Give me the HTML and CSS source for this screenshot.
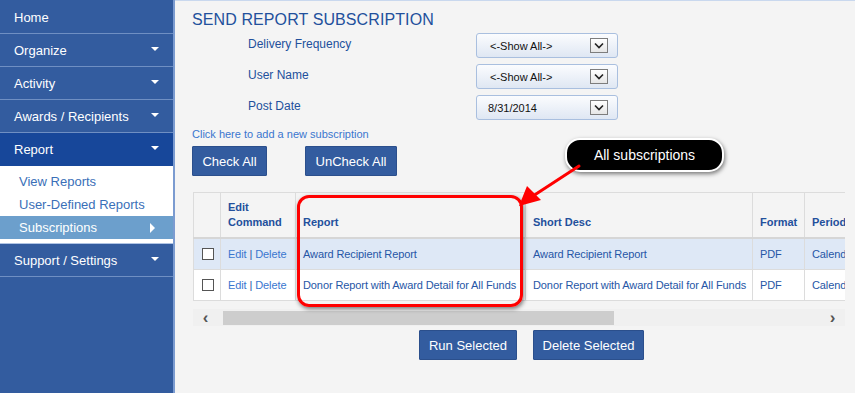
FILE: index.html
```html
<!DOCTYPE html>
<html>
  <head>
    <link rel="stylesheet" href="styles.css">
  </head>
  <body>
    <div class="page">
      <nav class="sidebar">
        <div class="nav-item">Home</div>
        <div class="nav-item has-menu">Organize<span class="caret"></span></div>
        <div class="nav-item has-menu">Activity<span class="caret"></span></div>
        <div class="nav-item has-menu">Awards / Recipients<span class="caret"></span></div>
        <div class="nav-item has-menu active">Report<span class="caret"></span></div>
        <div class="submenu">
          <div class="sub-item">View Reports</div>
          <div class="sub-item">User-Defined Reports</div>
          <div class="sub-item current">Subscriptions<span class="caret-right"></span></div>
        </div>
        <div class="nav-item has-menu">Support / Settings<span class="caret"></span></div>
      </nav>

      <main class="main">
        <h1 class="title">SEND REPORT SUBSCRIPTION</h1>

        <div class="filters">
          <label class="filter-label">Delivery Frequency</label>
          <div class="select"><span>&lt;-Show All-&gt;</span><span class="select-btn"><svg width="10" height="7" viewBox="0 0 10 7"><path d="M1 1.5 L5 5.5 L9 1.5" fill="none" stroke="#222" stroke-width="1.6"/></svg></span></div>
          <label class="filter-label">User Name</label>
          <div class="select"><span>&lt;-Show All-&gt;</span><span class="select-btn"><svg width="10" height="7" viewBox="0 0 10 7"><path d="M1 1.5 L5 5.5 L9 1.5" fill="none" stroke="#222" stroke-width="1.6"/></svg></span></div>
          <label class="filter-label">Post Date</label>
          <div class="select date"><span>8/31/2014</span><span class="select-btn"><svg width="10" height="7" viewBox="0 0 10 7"><path d="M1 1.5 L5 5.5 L9 1.5" fill="none" stroke="#222" stroke-width="1.6"/></svg></span></div>
        </div>

        <a class="add-link" href="#">Click here to add a new subscription</a>

        <div class="check-buttons">
          <button class="btn">Check All</button>
          <button class="btn">UnCheck All</button>
        </div>

        <div class="grid-area">
          <div class="grid-wrap">
            <table class="grid">
              <colgroup>
                <col class="c-check"><col class="c-edit"><col class="c-report"><col class="c-desc"><col class="c-format"><col class="c-period">
              </colgroup>
              <thead>
                <tr>
                  <th></th>
                  <th>Edit<br>Command</th>
                  <th>Report</th>
                  <th>Short Desc</th>
                  <th>Format</th>
                  <th>Period</th>
                </tr>
              </thead>
              <tbody>
                <tr class="alt">
                  <td class="cb"><span class="checkbox"></span></td>
                  <td class="cmd"><a href="#">Edit</a> | <a href="#">Delete</a></td>
                  <td>Award Recipient Report</td>
                  <td>Award Recipient Report</td>
                  <td>PDF</td>
                  <td>Calendar Year</td>
                </tr>
                <tr>
                  <td class="cb"><span class="checkbox"></span></td>
                  <td class="cmd"><a href="#">Edit</a> | <a href="#">Delete</a></td>
                  <td>Donor Report with Award Detail for All Funds</td>
                  <td>Donor Report with Award Detail for All Funds</td>
                  <td>PDF</td>
                  <td>Calendar Year</td>
                </tr>
              </tbody>
            </table>
          </div>
          <div class="hscroll">
            <span class="arrow">&#8249;</span>
            <div class="track"><div class="thumb"></div></div>
            <span class="arrow">&#8250;</span>
          </div>

          <div class="highlight"></div>
          <div class="callout">All subscriptions</div>
          <svg class="pointer" width="70" height="50" viewBox="0 0 70 50">
            <line x1="66" y1="4" x2="20" y2="34" stroke="#f00" stroke-width="3" stroke-linecap="round"/>
            <polygon points="6,44 14,24 28,38" fill="#f00"/>
          </svg>
        </div>

        <div class="action-buttons">
          <button class="btn">Run Selected</button>
          <button class="btn">Delete Selected</button>
        </div>
      </main>
    </div>
  </body>
</html>
```

FILE: styles.css
```css
:root {
  --nav-color: #335c9f;
  --nav-active: #17479a;
  --nav-current: #6c9fcc;
  --text-blue: #22509c;
  --link-blue: #3a76cf;
  --page-bg: #f4f4f4;
  --grid-line: #dcdcdc;
}

body {
  margin: 0;
  font-family: "Liberation Sans", Arial, sans-serif;
  background: #ffffff;
}

.page {
  display: flex;
  height: 393px;
}

/* sidebar */
.sidebar {
  width: 173px;
  padding-top: 1px;
  background: var(--nav-color);
  border-right: 2px solid #7b9bd0;
  flex-shrink: 0;
}

.nav-item {
  position: relative;
  height: 32px;
  line-height: 33px;
  padding-left: 14px;
  color: #fff;
  font-size: 13px;
  border-bottom: 1px solid #6f8fc3;
}

.nav-item.active {
  background: var(--nav-active);
  border-bottom: none;
  height: 33px;
}

.caret {
  position: absolute;
  right: 14px;
  top: 13px;
  width: 0;
  height: 0;
  border-left: 4px solid transparent;
  border-right: 4px solid transparent;
  border-top: 4px solid #fff;
}

.submenu {
  background: #fff;
  padding: 4px 0 4px;
  border-bottom: 1px solid #b0c4e4;
}

.sub-item {
  position: relative;
  height: 23px;
  line-height: 23px;
  padding-left: 19px;
  font-size: 13px;
  color: #3a6fb8;
}

.sub-item.current {
  background: var(--nav-current);
  color: #fff;
}

.caret-right {
  position: absolute;
  right: 18px;
  top: 7px;
  width: 0;
  height: 0;
  border-top: 5px solid transparent;
  border-bottom: 5px solid transparent;
  border-left: 5px solid #fff;
}

/* main */
.main {
  flex: 1;
  background: var(--page-bg);
  border-top: 1px solid #c9d8ee;
  padding: 0 0 0 17px;
  overflow: hidden;
}

.title {
  margin: 10px 0 0;
  font-size: 16px;
  font-weight: normal;
  color: var(--text-blue);
  letter-spacing: 0.1px;
}

.filters {
  display: grid;
  grid-template-columns: 228px 142px;
  grid-auto-rows: 25px;
  row-gap: 6px;
  margin: 4px 0 0 56px;
  align-items: center;
}

.filter-label {
  font-size: 12px;
  color: var(--text-blue);
  margin-top: -3px;
}

.select {
  box-sizing: border-box;
  height: 25px;
  border: 1px solid #a9bfdf;
  border-radius: 3px;
  background: linear-gradient(#fbfcfe, #dfe7f3);
  display: flex;
  align-items: center;
  justify-content: space-between;
  padding: 0 9px 0 13px;
  font-size: 11px;
  color: #111;
}

.select.date {
  padding-left: 11px;
}

.select-btn {
  box-sizing: border-box;
  width: 18px;
  height: 15px;
  border: 1px solid #7d7d7d;
  background: linear-gradient(#ffffff, #e6e6e6);
  display: flex;
  align-items: center;
  justify-content: center;
}

.add-link {
  display: block;
  margin-top: 8px;
  font-size: 11px;
  color: var(--link-blue);
  text-decoration: none;
}

.check-buttons {
  display: flex;
  gap: 38px;
  margin-top: 6px;
}

.btn {
  box-sizing: border-box;
  height: 30px;
  padding: 0;
  white-space: nowrap;
  border: 1px solid #2b4f8c;
  background: var(--nav-color);
  color: #fff;
  font-family: "Liberation Sans", Arial, sans-serif;
  font-size: 13px;
  border-radius: 1px;
}

.check-buttons .btn:first-child {
  width: 75px;
}

.check-buttons .btn:last-child {
  width: 92px;
}

/* grid */
.grid-area {
  position: relative;
  margin-top: 16px;
  width: 652px;
  margin-left: 1px;
}

.grid-wrap {
  width: 652px;
  overflow: hidden;
}

.grid {
  border-collapse: collapse;
  table-layout: fixed;
  width: 720px;
  font-size: 11px;
  letter-spacing: -0.1px;
  color: #2656a6;
}

.c-check { width: 27px; }
.c-edit { width: 75px; }
.c-report { width: 230px; }
.c-desc { width: 227px; }
.c-format { width: 52px; }
.c-period { width: 109px; }

.grid th,
.grid td {
  border: 1px solid var(--grid-line);
  text-align: left;
  white-space: nowrap;
  overflow: hidden;
  padding: 0 7px;
}

.grid th {
  height: 37px;
  vertical-align: bottom;
  padding-bottom: 7px;
  font-weight: bold;
  color: #23509c;
  background: var(--page-bg);
  line-height: 15px;
  letter-spacing: 0;
}

.grid thead tr {
  border-bottom: 2px solid #d6d6d6;
}

.grid td {
  height: 30px;
  background: #fff;
}

.grid tr.alt td {
  background: #dee8f6;
}

.grid td.cb {
  padding: 0 0 0 8px;
}

.checkbox {
  display: block;
  width: 10px;
  height: 10px;
  border: 1px solid #555;
  background: #fff;
}

.grid td.cmd a {
  color: var(--link-blue);
  text-decoration: none;
}

.hscroll {
  display: flex;
  align-items: center;
  height: 17px;
  margin-top: 8px;
  background: #f0f0f0;
}

.arrow {
  width: 25px;
  text-align: center;
  font-size: 17px;
  font-weight: bold;
  color: #555;
  line-height: 17px;
}

.track {
  flex: 1;
  height: 14px;
}

.thumb {
  width: 391px;
  height: 14px;
  background: #cdcdcd;
  margin-left: 5px;
}

/* annotation overlay */
.highlight {
  position: absolute;
  left: 104px;
  top: 3px;
  width: 220px;
  height: 106px;
  border: 3px solid #ff0000;
  border-radius: 12px;
  box-shadow: 1px 2px 4px rgba(0, 0, 0, 0.5);
}

.callout {
  position: absolute;
  left: 372px;
  top: -54px;
  width: 155px;
  height: 30px;
  line-height: 30px;
  background: #000;
  color: #fff;
  font-size: 14px;
  text-align: center;
  border: 2px solid #fff;
  border-radius: 15px;
  box-shadow: 1px 2px 4px rgba(0, 0, 0, 0.5);
}

.pointer {
  position: absolute;
  left: 320px;
  top: -30px;
}

.action-buttons {
  display: flex;
  gap: 16px;
  margin: 4px 0 0 227px;
}

.action-buttons .btn:first-child {
  width: 98px;
}

.action-buttons .btn:last-child {
  width: 111px;
}
```
